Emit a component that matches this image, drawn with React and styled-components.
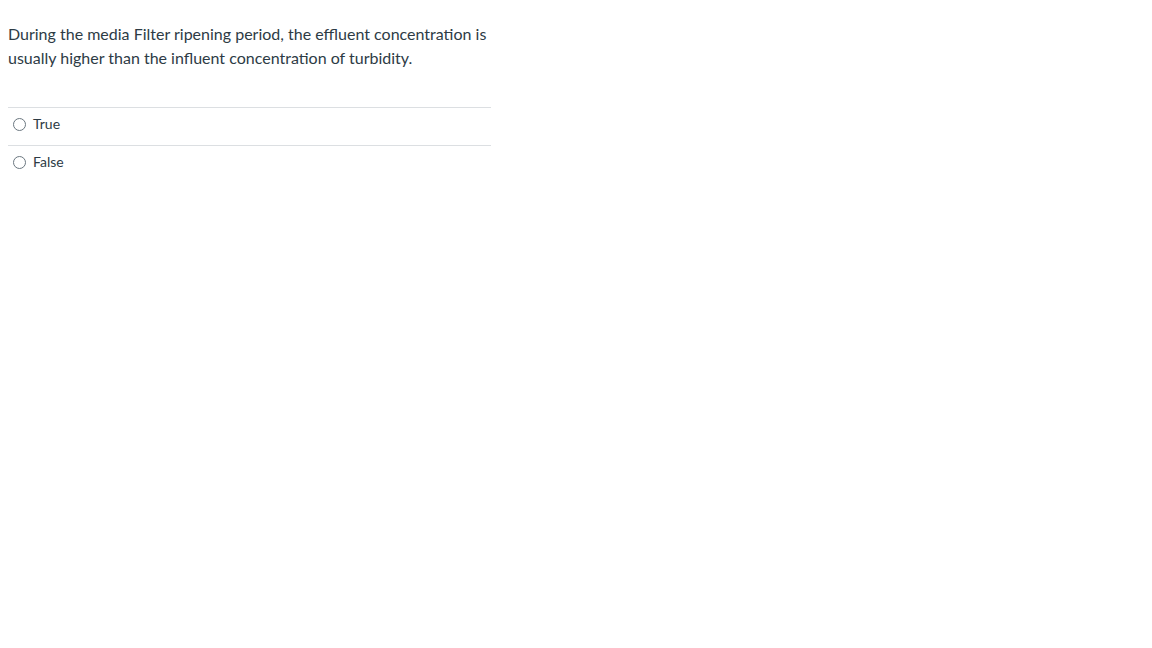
import React from 'react'
import styled, { createGlobalStyle } from 'styled-components'

const GlobalStyle = createGlobalStyle`
  body {
    margin: 8px;
    background: #fff;
    font-family: Lato, 'Helvetica Neue', Arial, sans-serif;
    color: #2d3b45;
  }
`

const Question = styled.div`
  width: 483px;
`

const QuestionText = styled.p`
  margin: 14px 0 37px;
  font-size: 16px;
  line-height: 24px;
`

const AnswerList = styled.div`
  display: flex;
  flex-direction: column;
`

const AnswerRow = styled.label`
  display: flex;
  align-items: center;
  gap: 7px;
  height: 38px;
  padding: 0 0 6px 5px;
  box-sizing: border-box;
  border-top: 1px solid #dcdfe2;
  font-size: 14px;
  line-height: 20px;
  color: #2d3b45;
  cursor: pointer;
`

const Radio = styled.span`
  width: 11px;
  height: 11px;
  margin-top: 2px;
  border: 1px solid #6b7780;
  border-radius: 50%;
  background: #fff;
  flex-shrink: 0;
`

const answers = ['True', 'False']

export default function App() {
  return (
    <>
      <GlobalStyle />
      <Question>
        <QuestionText>
          During the media Filter ripening period, the effluent concentration is usually higher
          than the influent concentration of turbidity.
        </QuestionText>
        <AnswerList>
          {answers.map((a) => (
            <AnswerRow key={a}>
              <Radio />
              {a}
            </AnswerRow>
          ))}
        </AnswerList>
      </Question>
    </>
  )
}
